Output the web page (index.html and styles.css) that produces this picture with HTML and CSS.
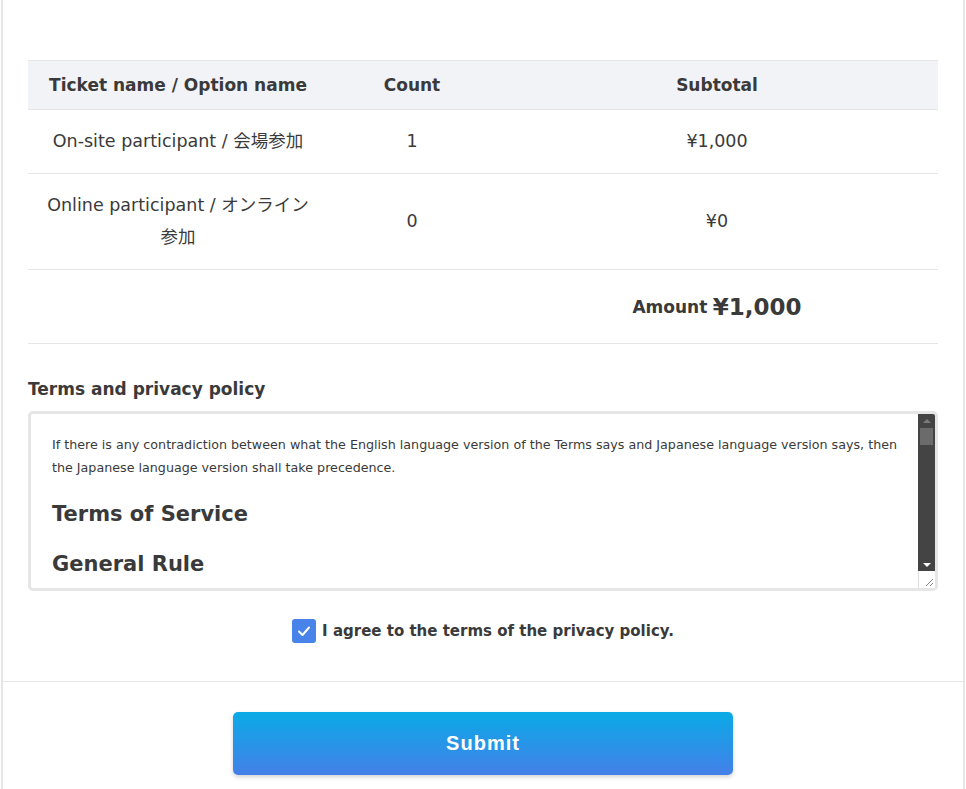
FILE: index.html
```html
<!DOCTYPE html>
<html lang="en">
<head>
<meta charset="utf-8">
<title>Order confirmation</title>
<link rel="stylesheet" href="styles.css">
</head>
<body>
<div class="card">
  <div class="card-body">
    <table class="order">
      <thead>
        <tr>
          <th class="c-name">Ticket name / Option name</th>
          <th class="c-count">Count</th>
          <th class="c-sub">Subtotal</th>
        </tr>
      </thead>
      <tbody>
        <tr>
          <td>On-site participant / 会場参加</td>
          <td>1</td>
          <td>¥1,000</td>
        </tr>
        <tr>
          <td>Online participant / オンライン参加</td>
          <td>0</td>
          <td>¥0</td>
        </tr>
        <tr class="total">
          <td></td>
          <td></td>
          <td><span class="amount-label">Amount</span> <span class="amount-value">¥1,000</span></td>
        </tr>
      </tbody>
    </table>

    <h3 class="terms-title">Terms and privacy policy</h3>
    <div class="terms-box">
      <div class="terms-content">
        <p class="terms-note">If there is any contradiction between what the English language version of the Terms says and Japanese language version says, then the Japanese language version shall take precedence.</p>
        <h2 class="terms-h">Terms of Service</h2>
        <h2 class="terms-h">General Rule</h2>
      </div>
      <div class="scrollbar">
        <div class="sb-track">
          <span class="sb-up"></span>
          <span class="sb-thumb"></span>
          <span class="sb-fill"></span>
          <span class="sb-down"></span>
        </div>
        <div class="sb-resizer">
          <svg width="10" height="10" viewBox="0 0 10 10"><path d="M9 2 L2 9 M9 6 L6 9" stroke="#888" stroke-width="1" fill="none"/></svg>
        </div>
      </div>
    </div>

    <label class="agree">
      <span class="checkbox">
        <svg width="16" height="16" viewBox="0 0 16 16"><path d="M3 8.5 L6.5 12 L13 4.5" stroke="#fff" stroke-width="2" fill="none" stroke-linecap="round" stroke-linejoin="round"/></svg>
      </span>
      <span class="agree-text">I agree to the terms of the privacy policy.</span>
    </label>
  </div>
  <div class="card-footer">
    <button class="submit" type="button">Submit</button>
  </div>
</div>
</body>
</html>
```

FILE: styles.css
```css
* { box-sizing: border-box; }
html, body { margin: 0; padding: 0; background: #fff; }
body {
  font-family: "DejaVu Sans", "Noto Sans CJK JP", sans-serif;
  color: #3a3a3a;
  font-size: 17.5px;
}
.card {
  margin: 0 1px;
  border-left: 2px solid #e6e6e6;
  border-right: 2px solid #e6e6e6;
  height: 789px;
}
.card-body {
  padding: 60px 25px 0 25px;
}
.order {
  width: 100%;
  border-collapse: collapse;
  table-layout: fixed;
}
.order th, .order td {
  text-align: center;
  line-height: 32px;
  border-bottom: 1px solid #e6e6e6;
}
.order th {
  background: #f2f3f7;
  font-weight: 700;
  font-size: 17px;
  padding: 8px 15px;
  border-top: 1px solid #e6e6e6;
}
.order td {
  font-weight: 400;
  padding: 15px 15px 16px;
}
.c-name { width: 300px; }
.c-count { width: 168px; }
.order tr.total td {
  padding: 20px 15px 20px;
  height: 73px;
  line-height: 32px;
}
.amount-label { font-weight: 700; font-size: 17px; line-height: 32px; vertical-align: middle; }
.amount-value { font-weight: 700; font-size: 23px; line-height: 32px; vertical-align: middle; }

.terms-title {
  margin: 32px 0 9px;
  font-size: 17px;
  font-weight: 700;
  line-height: 26px;
}
.terms-box {
  height: 180px;
  border: 3px solid #e6e6e6;
  border-radius: 5px;
  display: flex;
  overflow: hidden;
}
.terms-content {
  flex: 1;
  padding: 19px 20px 0 21px;
  overflow: hidden;
}
.terms-note {
  margin: 0;
  font-size: 12.7px;
  line-height: 23px;
}
.terms-h {
  margin: 18px 0 0;
  font-size: 21px;
  font-weight: 700;
  line-height: 34px;
}
.terms-h + .terms-h { margin-top: 16px; }
.scrollbar {
  width: 17px;
  display: flex;
  flex-direction: column;
}
.sb-track {
  flex: 1;
  background: #444;
  display: flex;
  flex-direction: column;
  align-items: center;
  padding: 5px 0 4px;
}
.sb-up {
  width: 0; height: 0;
  border-left: 4px solid transparent;
  border-right: 4px solid transparent;
  border-bottom: 4px solid #7a7a7a;
}
.sb-thumb {
  margin-top: 5px;
  width: 13px;
  height: 17px;
  background: #6b6b6b;
}
.sb-fill { flex: 1; }
.sb-down {
  width: 0; height: 0;
  border-left: 4px solid transparent;
  border-right: 4px solid transparent;
  border-top: 4px solid #fff;
}
.sb-resizer {
  height: 17px;
  background: #fff;
  border-left: 1px solid #ddd;
  display: flex;
  align-items: flex-end;
  justify-content: flex-end;
}
.sb-resizer svg { display: block; margin: 0 1px 1px 0; }

.agree {
  display: flex;
  align-items: center;
  justify-content: center;
  gap: 6px;
  margin-top: 27px;
  height: 26px;
  margin-bottom: 37px;
}
.checkbox {
  width: 24px;
  height: 24px;
  border-radius: 3px;
  background: #4783e8;
  display: flex;
  align-items: center;
  justify-content: center;
}
.checkbox svg { display: block; }
.agree-text { font-weight: 700; font-size: 15px; }

.card-footer {
  border-top: 1px solid #e6e6e6;
  padding-top: 30px;
  display: flex;
  justify-content: center;
}
.submit {
  width: 500px;
  height: 63px;
  border: none;
  border-radius: 5px;
  background: linear-gradient(to bottom, #0aaae6, #4480e8);
  color: #fff;
  font-family: "Liberation Sans", Arial, sans-serif;
  font-size: 20px;
  font-weight: 700;
  letter-spacing: 1px;
  box-shadow: 0 2px 4px rgba(0,0,0,0.18);
}
```
